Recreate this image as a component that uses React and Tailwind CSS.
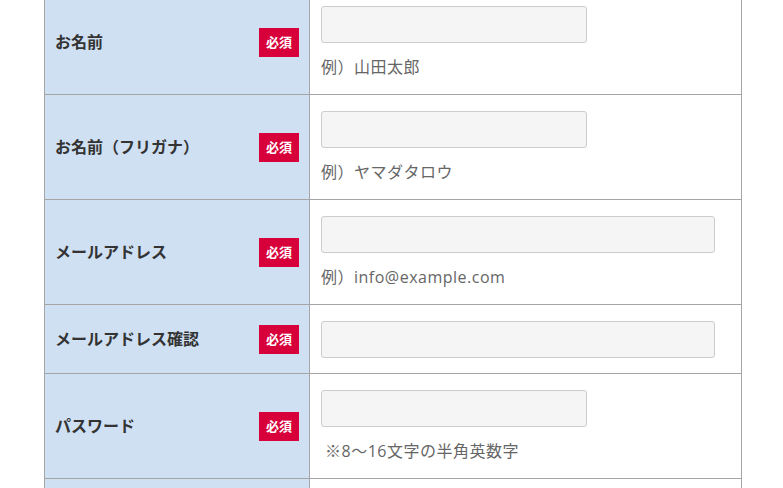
import React from "react";

const rows = [
  { label: "お名前", hint: "例）山田太郎", wide: false },
  { label: "お名前（フリガナ）", hint: "例）ヤマダタロウ", wide: false },
  { label: "メールアドレス", hint: "例）info@example.com", wide: true },
  { label: "メールアドレス確認", hint: null, wide: true },
  { label: "パスワード", hint: "※8〜16文字の半角英数字", wide: false, indent: true },
  { label: "", hint: null, wide: false, last: true },
];

export default function App() {
  return (
    <div
      className="w-[783px] h-[488px] overflow-hidden bg-white"
      style={{ fontFamily: '"Open Sans", "Noto Sans CJK JP", sans-serif' }}
    >
      <div className="ml-[44px] w-[698px] -mt-[11px] border-l border-r border-[#a5a5a5]">
        {rows.map((r, i) => (
          <div key={i} className="flex border-t border-[#a5a5a5]">
            <div className="w-[265px] bg-[#cfe0f2] border-r border-[#a5a5a5] flex items-center justify-between pl-[10px] pr-[10px]">
              <span className="text-[16px] font-bold text-[#333] leading-[22px]">{r.label}</span>
              {!r.last && (
                <span className="w-[40px] h-[29px] bg-[#d7003a] text-white text-[13px] font-bold flex items-center justify-center leading-none">
                  必須
                </span>
              )}
            </div>
            <div className={`flex-1 pl-[11px] pt-4 ${r.hint ? "pb-4" : "pb-[15px]"}`}>
              <div
                className={`${r.wide ? "w-[394px]" : "w-[266px]"} h-[37px] bg-[#f5f5f5] border border-[#cccccc] rounded-[3px]`}
              />
              {r.hint && (
                <div
                  className={`mt-[13px] text-[16px] leading-[22px] tracking-[0.5px] text-[#666] ${r.indent ? "pl-[4px]" : ""}`}
                >
                  {r.hint}
                </div>
              )}
            </div>
          </div>
        ))}
      </div>
    </div>
  );
}
